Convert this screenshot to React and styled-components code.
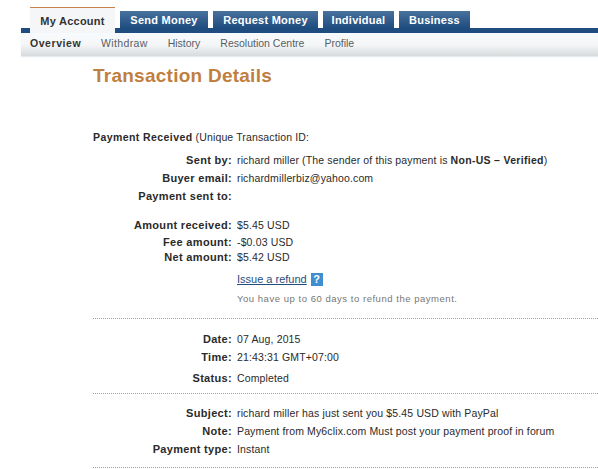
import React from "react"
import styled, { createGlobalStyle } from "styled-components"

const GlobalStyle = createGlobalStyle`
  html, body {
    margin: 0;
    padding: 0;
    background: #fff;
    overflow: hidden;
  }
  body {
    font-family: "Liberation Sans", Arial, sans-serif;
    font-size: 11px;
    color: #2a2a2a;
  }
`

const tabs = [
  { label: "My Account", width: 85 },
  { label: "Send Money", width: 88 },
  { label: "Request Money", width: 105 },
  { label: "Individual", width: 71 },
  { label: "Business", width: 71 },
]
const subLinks = [
  { label: "Overview" },
  { label: "Withdraw", wide: true },
  { label: "History" },
  { label: "Resolution Centre" },
  { label: "Profile" },
]

const App = () => {
  return (
    <Page>
      <GlobalStyle />
      <Header>
        <TabRow>
          {tabs.map((t, i) => (
            <Tab key={t.label} $active={i === 0} $width={t.width}>
              {t.label}
            </Tab>
          ))}
        </TabRow>
        <SubNav>
          {subLinks.map((l, i) => (
            <SubLink key={l.label} $active={i === 0} $wide={l.wide}>
              {l.label}
            </SubLink>
          ))}
        </SubNav>
      </Header>

      <Content>
        <Title>Transaction Details</Title>
        <Intro>
          <b>Payment Received</b> (Unique Transaction ID:
        </Intro>

        <Row $h={18} $top={5}>
          <Label>Sent by:</Label>
          <Value>
            richard miller (The sender of this payment is <Strong>Non-US – Verified</Strong>)
          </Value>
        </Row>
        <Row $h={18}>
          <Label>Buyer email:</Label>
          <Value>richardmillerbiz@yahoo.com</Value>
        </Row>
        <Row $h={18}>
          <Label>Payment sent to:</Label>
          <Value />
        </Row>

        <Row $h={18} $top={11}>
          <Label>Amount received:</Label>
          <Value>$5.45 USD</Value>
        </Row>
        <Row $h={16}>
          <Label>Fee amount:</Label>
          <Value>-$0.03 USD</Value>
        </Row>
        <Row $h={15}>
          <Label>Net amount:</Label>
          <Value>$5.42 USD</Value>
        </Row>

        <Row $h={18} $top={5}>
          <Label />
          <RefundLine>
            <Refund>Issue a refund</Refund>
            <Help>?</Help>
          </RefundLine>
        </Row>
        <Row $h={18} $top={2}>
          <Label />
          <Hint>You have up to 60 days to refund the payment.</Hint>
        </Row>

        <Divider $top={10} />

        <Row $h={18} $top={11}>
          <Label>Date:</Label>
          <Value>07 Aug, 2015</Value>
        </Row>
        <Row $h={18}>
          <Label>Time:</Label>
          <Value>21:43:31 GMT+07:00</Value>
        </Row>
        <Row $h={18} $top={3}>
          <Label>Status:</Label>
          <Value>Completed</Value>
        </Row>

        <Divider $top={6} />

        <Row $h={18} $top={10}>
          <Label>Subject:</Label>
          <Value>richard miller has just sent you $5.45 USD with PayPal</Value>
        </Row>
        <Row $h={18}>
          <Label>Note:</Label>
          <Value>Payment from My6clix.com Must post your payment proof in forum</Value>
        </Row>
        <Row $h={18}>
          <Label>Payment type:</Label>
          <Value>Instant</Value>
        </Row>

        <Divider $top={9} />
      </Content>
    </Page>
  )
}

const Page = styled.div`
  width: 598px;
  height: 469px;
  overflow: hidden;
`

const Header = styled.header`
  margin-left: 21px;
  padding-top: 7px;
`

const TabRow = styled.nav`
  display: flex;
  align-items: flex-end;
  gap: 5px;
  height: 26px;
  padding-left: 9px;
  background: linear-gradient(to top, #1f4d80 5px, transparent 5px);
`

const Tab = styled.div`
  display: flex;
  align-items: center;
  justify-content: center;
  box-sizing: border-box;
  width: ${(p) => p.$width}px;
  font-weight: bold;
  font-size: 11px;
  letter-spacing: 0.25px;
  white-space: nowrap;
  ${(p) =>
    p.$active
      ? `
    height: 26px;
    color: #333;
    background: #f5f6f7;
    border-top: 1px solid #c9814c;
  `
      : `
    height: 17px;
    margin-bottom: 5px;
    color: #fff;
    background: linear-gradient(to bottom, #48719c, #1f4d80);
  `}
`

const SubNav = styled.nav`
  display: flex;
  align-items: center;
  gap: 20px;
  height: 23px;
  padding: 0 0 4px 9px;
  box-sizing: border-box;
  background: linear-gradient(to bottom, #f8fbfe, #f5f6f7 50%, #d8dbdd);
  box-shadow: 0 1px 1px #e6ebef;
`

const SubLink = styled.span`
  font-size: 10.5px;
  color: ${(p) => (p.$active ? "#333" : "#555e66")};
  font-weight: ${(p) => (p.$active ? "bold" : "normal")};
  letter-spacing: ${(p) => (p.$active ? "0.55px" : p.$wide ? "0.35px" : "0")};
`

const Content = styled.main`
  padding-left: 93px;
`

const Title = styled.h1`
  margin: 8px 0 0;
  height: 24px;
  line-height: 24px;
  font-size: 19px;
  font-weight: bold;
  letter-spacing: 0.25px;
  color: #c07f3f;
`

const Intro = styled.div`
  margin-top: 40px;
  height: 18px;
  line-height: 18px;
  font-size: 10.5px;
  letter-spacing: 0.14px;
  b {
    letter-spacing: 0.42px;
  }
`

const Row = styled.div`
  display: grid;
  grid-template-columns: 139px 1fr;
  column-gap: 5px;
  height: ${(p) => p.$h}px;
  line-height: ${(p) => p.$h}px;
  margin-top: ${(p) => p.$top || 0}px;
  white-space: nowrap;
`

const Label = styled.div`
  text-align: right;
  font-weight: bold;
  font-size: 11px;
  letter-spacing: 0.32px;
`

const Value = styled.div`
  font-size: 10.5px;
  letter-spacing: 0.14px;
`

const Strong = styled.b`
  font-weight: bold;
  letter-spacing: 0.3px;
`

const RefundLine = styled.div`
  display: flex;
  align-items: center;
  gap: 4px;
`

const Refund = styled.a`
  color: #1f4d80;
  text-decoration: underline;
  font-size: 11px;
`

const Help = styled.span`
  display: inline-flex;
  align-items: center;
  justify-content: center;
  width: 12px;
  height: 13px;
  background: #3f8fd0;
  color: #fff;
  font-weight: bold;
  font-size: 11px;
  line-height: 1;
`

const Hint = styled.div`
  font-size: 9.5px;
  letter-spacing: 0.53px;
  color: #777;
`

const Divider = styled.hr`
  margin: ${(p) => p.$top}px 0 0;
  border: 0;
  border-top: 1px dotted #a0a0a0;
`

export default App
